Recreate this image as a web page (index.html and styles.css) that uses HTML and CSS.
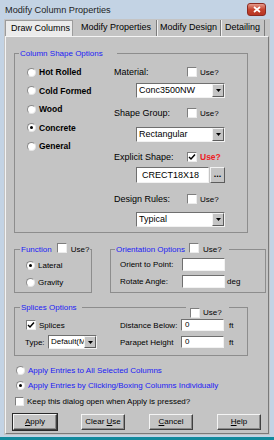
FILE: index.html
```html
<!DOCTYPE html>
<html lang="en">
<head>
    <meta charset="UTF-8">
    <meta name="viewport" content="width=device-width, initial-scale=1.0">
    <title>Modify Column Properties</title>
    <link rel="stylesheet" href="styles.css">
</head>
<body>
    <div class="window">
        <div class="titlebar">
            <span class="title">Modify Column Properties</span>
            <span class="close">
                <svg width="8" height="7" viewBox="0 0 8 7"><path d="M1 1 L7 6 M7 1 L1 6" stroke="#fff" stroke-width="1.7"/></svg>
            </span>
        </div>
        <div class="client">
            <div class="tabs">
                <span class="tab tab-draw">Draw Columns</span>
                <span class="tab tab-active">Modify Properties</span>
                <span class="tab tab-design">Modify Design</span>
                <span class="tab tab-detail">Detailing</span>
            </div>
            <div class="panel">
                <fieldset class="group group-shape">
                    <legend class="legend legend-shape">Column Shape Options</legend>
                    <div class="shape-body">
                        <div class="shape-types">
                            <div class="opt opt-bold"><span class="radio"></span>Hot Rolled</div>
                            <div class="opt opt-bold"><span class="radio"></span>Cold Formed</div>
                            <div class="opt opt-bold"><span class="radio"></span>Wood</div>
                            <div class="opt opt-bold"><span class="radio checked"></span>Concrete</div>
                            <div class="opt opt-bold"><span class="radio"></span>General</div>
                        </div>
                        <div class="shape-fields">
                            <div class="field-head">
                                <span class="field-label">Material:</span>
                                <span class="check"></span>
                                <span class="use">Use?</span>
                            </div>
                            <div class="combo combo-a">
                                <span class="combo-text">Conc3500NW</span>
                                <span class="combo-btn"><svg width="5" height="3" viewBox="0 0 5 3"><path d="M0 0 H5 L2.5 3 Z" fill="#000"/></svg></span>
                            </div>
                            <div class="field-head head-b">
                                <span class="field-label">Shape Group:</span>
                                <span class="check"></span>
                                <span class="use">Use?</span>
                            </div>
                            <div class="combo combo-b">
                                <span class="combo-text">Rectangular</span>
                                <span class="combo-btn"><svg width="5" height="3" viewBox="0 0 5 3"><path d="M0 0 H5 L2.5 3 Z" fill="#000"/></svg></span>
                            </div>
                            <div class="field-head head-c">
                                <span class="field-label">Explicit Shape:</span>
                                <span class="check"><svg width="8" height="8" viewBox="0 0 8 8"><path d="M1 4 L3 6 L7 1.5" fill="none" stroke="#000" stroke-width="1.5"/></svg></span>
                                <span class="use use-red">Use?</span>
                            </div>
                            <div class="shape-row">
                                <span class="textbox textbox-shape">CRECT18X18</span>
                                <span class="dots">...</span>
                            </div>
                            <div class="field-head head-d">
                                <span class="field-label">Design Rules:</span>
                                <span class="check"></span>
                                <span class="use">Use?</span>
                            </div>
                            <div class="combo combo-d">
                                <span class="combo-text">Typical</span>
                                <span class="combo-btn"><svg width="5" height="3" viewBox="0 0 5 3"><path d="M0 0 H5 L2.5 3 Z" fill="#000"/></svg></span>
                            </div>
                        </div>
                    </div>
                </fieldset>

                <div class="mid">
                    <fieldset class="group group-func">
                        <legend class="legend legend-func">
                            <span>Function</span><span class="check"></span><span class="legend-use">Use?</span>
                        </legend>
                        <div class="opt"><span class="radio checked"></span>Lateral</div>
                        <div class="opt opt-next"><span class="radio"></span>Gravity</div>
                    </fieldset>
                    <fieldset class="group group-orient">
                        <legend class="legend legend-orient">
                            <span>Orientation Options</span><span class="check"></span><span class="legend-use">Use?</span>
                        </legend>
                        <div class="line">
                            <span class="line-label">Orient to Point:</span>
                            <span class="textbox textbox-small"></span>
                        </div>
                        <div class="line line-next">
                            <span class="line-label">Rotate Angle:</span>
                            <span class="textbox textbox-small"></span>
                            <span class="unit">deg</span>
                        </div>
                    </fieldset>
                </div>

                <fieldset class="group group-splice">
                    <legend class="legend legend-splice">Splices Options</legend>
                    <div class="splice-use"><span class="check"></span><span class="legend-use">Use?</span></div>
                    <div class="splice-body">
                        <div class="splice-left">
                            <div class="opt"><span class="check"><svg width="8" height="8" viewBox="0 0 8 8"><path d="M1 4 L3 6 L7 1.5" fill="none" stroke="#000" stroke-width="1.5"/></svg></span>Splices</div>
                            <div class="type-row">
                                <span class="type-label">Type:</span>
                                <div class="combo combo-type">
                                    <span class="combo-text">Default(M</span>
                                    <span class="combo-btn"><svg width="5" height="3" viewBox="0 0 5 3"><path d="M0 0 H5 L2.5 3 Z" fill="#000"/></svg></span>
                                </div>
                            </div>
                        </div>
                        <div class="splice-right">
                            <div class="line">
                                <span class="line-label line-label-wide">Distance Below:</span>
                                <span class="textbox textbox-ft">0</span>
                                <span class="unit unit-ft">ft</span>
                            </div>
                            <div class="line line-next">
                                <span class="line-label line-label-wide">Parapet Height</span>
                                <span class="textbox textbox-ft">0</span>
                                <span class="unit unit-ft">ft</span>
                            </div>
                        </div>
                    </div>
                </fieldset>

                <div class="apply">
                    <div class="opt opt-blue"><span class="radio"></span>Apply Entries to All Selected Columns</div>
                    <div class="opt opt-blue opt-apply2"><span class="radio checked"></span>Apply Entries by Clicking/Boxing Columns Individually</div>
                    <div class="opt opt-keep"><span class="check"></span>Keep this dialog open when Apply is pressed?</div>
                </div>

                <div class="buttons">
                    <span class="btn btn-default"><u>A</u>pply</span>
                    <span class="btn">Clear <u>U</u>se</span>
                    <span class="btn"><u>C</u>ancel</span>
                    <span class="btn"><u>H</u>elp</span>
                </div>
            </div>
        </div>
        <div class="taskbar"></div>
    </div>
</body>
</html>
```

FILE: styles.css
```css
* {
    box-sizing: border-box;
}

body {
    margin: 0;
    font-family: "Liberation Sans", Arial, sans-serif;
    font-size: 9px;
    color: #000;
    background-color: #c3d3e4;
}

.window {
    width: 274px;
    height: 440px;
    display: flex;
    flex-direction: column;
    background-color: #c3d3e4;
    overflow: hidden;
}

.titlebar {
    height: 19px;
    flex-shrink: 0;
    display: flex;
    align-items: center;
    padding-left: 5px;
}

.title {
    flex: 1;
    font-size: 9.2px;
    color: #1e1e1e;
}

.close {
    width: 19px;
    height: 13px;
    margin-right: 8px;
    display: flex;
    align-items: center;
    justify-content: center;
    border: 1px solid #8c2a20;
    border-radius: 3px;
    background: linear-gradient(#e49a8c, #c6442f 50%, #b73522);
}

.client {
    flex: 1;
    display: flex;
    flex-direction: column;
    margin: 0 4px;
    padding: 0 1px 1px;
    background-color: #c4c4c4;
}

/* tab strip */
.tabs {
    height: 17px;
    flex-shrink: 0;
    display: flex;
    align-items: flex-end;
}

.tab {
    height: 16px;
    line-height: 15px;
    font-size: 9px;
    white-space: nowrap;
}

.tab-draw {
    width: 68px;
    padding-left: 5px;
    background-color: #ebebeb;
    border: 1px solid #9c9c9c;
    border-bottom: none;
}

.tab-active {
    width: 83px;
    padding-left: 8px;
}

.tab-design {
    width: 64px;
    padding-left: 3px;
    border-left: 1px solid #7c7c7c;
    box-shadow: inset 1px 0 0 #f2f2f2;
}

.tab-detail {
    width: 45px;
    padding-left: 4px;
    border-left: 1px solid #7c7c7c;
    border-right: 1px solid #7c7c7c;
    box-shadow: inset 1px 0 0 #f2f2f2;
}

.panel {
    flex: 1;
    border: 1px solid;
    border-color: #f4f4f4 #7a7a7a #7a7a7a #f4f4f4;
    padding: 11px 0 0 8px;
}

/* group boxes */
.group {
    margin: 0;
    min-width: 0;
    border: 1px solid #8d8d8d;
}

.legend {
    font-size: 8px;
    line-height: 11px;
    color: #1b1bf5;
    white-space: nowrap;
}

.legend .check {
    vertical-align: -1px;
}

.legend-use {
    color: #000;
}

.group-shape {
    width: 234px;
    padding: 7px 0 5px 12px;
}

.legend-shape {
    margin-left: -8px;
    padding: 0 14px 0 1px;
}

.shape-body {
    display: flex;
}

.shape-types {
    width: 87px;
    display: flex;
    flex-direction: column;
    gap: 6.5px;
}

.opt {
    height: 12px;
    display: flex;
    align-items: center;
    font-size: 8px;
    white-space: nowrap;
}

.opt-bold {
    font-weight: bold;
    font-size: 8.5px;
}

.radio {
    width: 9px;
    height: 9px;
    margin-right: 3px;
    flex-shrink: 0;
    border-radius: 50%;
    border: 1px solid;
    border-color: #8a8a8a #e6e6e6 #e6e6e6 #8a8a8a;
    background-color: #fff;
    display: flex;
    align-items: center;
    justify-content: center;
}

.radio.checked::after {
    content: "";
    width: 3px;
    height: 3px;
    border-radius: 50%;
    background-color: #000;
}

.check {
    width: 10px;
    height: 10px;
    flex-shrink: 0;
    display: inline-flex;
    align-items: center;
    justify-content: center;
    border: 1px solid;
    border-color: #7e7e7e #ececec #ececec #7e7e7e;
    background-color: #fff;
}

.shape-fields {
    display: flex;
    flex-direction: column;
}

.field-head {
    height: 12px;
    display: flex;
    align-items: center;
}

.field-label {
    width: 73px;
}

.use {
    margin-left: 3px;
    font-size: 8px;
}

.use-red {
    color: #ee1c24;
    font-weight: bold;
    font-size: 8.5px;
}

.head-b,
.head-c {
    margin-top: 9px;
}

.head-d {
    margin-top: 10px;
}

.combo {
    height: 15px;
    display: flex;
    background-color: #fff;
    border: 1px solid;
    border-color: #6f6f6f #f2f2f2 #f2f2f2 #6f6f6f;
}

.combo-a,
.combo-b,
.combo-d {
    width: 89px;
    margin-left: 22px;
}

.combo-a {
    margin-top: 5px;
}

.combo-b {
    margin-top: 8px;
}

.combo-d {
    margin-top: 7px;
}

.combo-text {
    flex: 1;
    padding-left: 2px;
    line-height: 13px;
    overflow: hidden;
    white-space: nowrap;
}

.combo-btn {
    width: 12px;
    display: flex;
    align-items: center;
    justify-content: center;
    background-color: #c4c4c4;
    border: 1px solid;
    border-color: #f2f2f2 #5c5c5c #5c5c5c #f2f2f2;
}

.shape-row {
    height: 16px;
    margin: 4px 0 0 22px;
    display: flex;
    gap: 1px;
}

.textbox {
    display: block;
    background-color: #fff;
    border: 1px solid;
    border-color: #6f6f6f #f2f2f2 #f2f2f2 #6f6f6f;
    padding-left: 3px;
    white-space: nowrap;
}

.textbox-shape {
    width: 73px;
    line-height: 14px;
    padding-left: 5px;
}

.dots {
    width: 15px;
    text-align: center;
    line-height: 12px;
    border: 1px solid;
    border-color: #f2f2f2 #5c5c5c #5c5c5c #f2f2f2;
    font-weight: bold;
}

/* function and orientation */
.mid {
    display: flex;
    margin-top: 10px;
}

.group-func {
    width: 78px;
    padding: 4px 0 4px 11px;
}

.legend-func {
    margin-left: -6px;
    padding: 0 1px;
}

.legend-func .check {
    margin: 0 4px 0 5px;
}

.opt-next {
    margin-top: 5px;
}

.group-orient {
    width: 156px;
    margin-left: 18px;
    padding: 3px 0 4px 9px;
}

.legend-orient {
    margin-left: -5px;
    padding: 0 7px 0 1px;
}

.legend-orient .check {
    margin: 0 4px 0 4px;
}

.line {
    height: 13px;
    display: flex;
    align-items: center;
    font-size: 8px;
}

.line-next {
    margin-top: 4px;
}

.line-label {
    width: 62px;
    white-space: nowrap;
}

.textbox-small {
    width: 43px;
    height: 13px;
}

.unit {
    margin-left: 2px;
}

/* splices */
.group-splice {
    position: relative;
    width: 234px;
    margin-top: 9px;
    padding: 6px 0 6px 11px;
}

.legend-splice {
    margin-left: -6px;
    padding: 0 5px 0 1px;
}

.splice-use {
    position: absolute;
    left: 171px;
    top: -6px;
    height: 11px;
    display: flex;
    align-items: center;
    gap: 3px;
    padding: 0 7px 0 4px;
    font-size: 8px;
    background-color: #c4c4c4;
}

.splice-body {
    display: flex;
}

.splice-left {
    width: 94px;
}

.splice-left .check {
    margin-right: 3px;
}

.type-row {
    height: 14px;
    margin-top: 4px;
    margin-left: -1px;
    display: flex;
    align-items: center;
    font-size: 8px;
}

.type-label {
    width: 23px;
}

.combo-type {
    width: 49px;
    height: 14px;
}

.combo-type .combo-text {
    line-height: 12px;
    font-size: 8px;
}

.splice-right .line {
    height: 12px;
}

.splice-right .line-next {
    margin-top: 5px;
}

.line-label-wide {
    width: 61px;
}

.textbox-ft {
    width: 43px;
    height: 12px;
    line-height: 10px;
    font-size: 8px;
}

.unit-ft {
    margin-left: 5px;
}

/* apply options */
.apply {
    margin-top: 8px;
    padding-left: 2px;
}

.opt-blue {
    color: #1b1bf5;
}

.opt-apply2 {
    margin-top: 3px;
}

.opt-keep {
    margin: 4px 0 0 -1px;
}

.opt-keep .check {
    margin-right: 3px;
    width: 9px;
    height: 9px;
}

.buttons {
    display: flex;
    gap: 24px;
    margin: 7px 0 0 -1px;
}

.btn {
    width: 44px;
    height: 16px;
    line-height: 14px;
    text-align: center;
    font-size: 8px;
    border: 1px solid;
    border-color: #f4f4f4 #404040 #404040 #f4f4f4;
    box-shadow: inset -1px -1px 0 #8a8a8a;
}

.btn-default {
    outline: 1px solid #2a2a2a;
}

.taskbar {
    height: 3px;
    margin-top: 2px;
    flex-shrink: 0;
    background-color: #12899c;
}
```
